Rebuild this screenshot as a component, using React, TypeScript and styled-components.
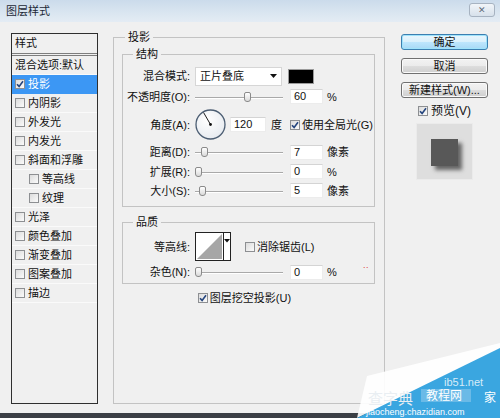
import React from 'react';
import styled, { createGlobalStyle } from 'styled-components';

const GlobalStyle = createGlobalStyle`
  html, body {
    margin: 0;
    padding: 0;
    background: #f0f0f0;
  }
  body {
    font-family: "Liberation Sans", "Noto Sans CJK SC", sans-serif;
    font-size: 11px;
    color: #111;
  }
`;

interface Effect {
  name: string
  checked?: boolean
  selected?: boolean
  sub?: boolean
}

const effects: Effect[] = [
  { name: '投影', checked: true, selected: true },
  { name: '内阴影' },
  { name: '外发光' },
  { name: '内发光' },
  { name: '斜面和浮雕' },
  { name: '等高线', sub: true },
  { name: '纹理', sub: true },
  { name: '光泽' },
  { name: '颜色叠加' },
  { name: '渐变叠加' },
  { name: '图案叠加' },
  { name: '描边' },
];

const CheckBox = ({ checked }: { checked?: boolean }) => (
  <Box>
    {checked && (
      <svg width="8" height="8" viewBox="0 0 8 8">
        <path d="M1 4.2 L3.1 6.4 L7 1.2" stroke="#25457e" strokeWidth="1.6" fill="none" />
      </svg>
    )}
  </Box>
);

const Slider = ({ pos }: { pos: number }) => (
  <Track>
    <Thumb style={{ left: Math.round(pos * 81) }} />
  </Track>
);

const Dial = () => (
  <svg width="31" height="31" viewBox="0 0 31 31">
    <defs>
      <radialGradient id="dialFill" cx="40%" cy="35%" r="70%">
        <stop offset="0" stopColor="#ffffff" />
        <stop offset="1" stopColor="#e6eaef" />
      </radialGradient>
    </defs>
    <circle cx="15.5" cy="15.5" r="14.5" fill="url(#dialFill)" stroke="#4b5d72" strokeWidth="1.3" />
    <line x1="15.5" y1="15.5" x2="8.6" y2="3.6" stroke="#1b1b1b" strokeWidth="1" />
    <circle cx="15.5" cy="15.5" r="1.4" fill="#111" />
  </svg>
);

const ContourPicker = () => (
  <Contour>
    <svg width="27" height="27" viewBox="0 0 27 27">
      <rect x="0" y="0" width="27" height="27" fill="#fff" />
      <polygon points="1,26 26,1 26,26" fill="#a6a6a6" />
    </svg>
    <ContourArrow>
      <svg width="6" height="4" viewBox="0 0 6 4">
        <polygon points="0,0 6,0 3,3.5" fill="#111" />
      </svg>
    </ContourArrow>
  </Contour>
);

const App = () => {
  return (
    <>
      <GlobalStyle />
      <Window>
        <TitleBar>
          <Title>图层样式</Title>
          <CloseButton>✕</CloseButton>
        </TitleBar>
        <Body>
          <StyleList>
            <ListHeader>样式</ListHeader>
            <ListRow>混合选项:默认</ListRow>
            {effects.map(e => (
              <ListRow key={e.name} $selected={e.selected} $sub={e.sub}>
                <CheckBox checked={e.checked} />
                <span>{e.name}</span>
              </ListRow>
            ))}
          </StyleList>

          <OuterGroup>
            <Legend $inset={3}>投影</Legend>
            <InnerGroup>
              <Legend $inset={10}>结构</Legend>
              <FormRow $h={20}>
                <Label>混合模式:</Label>
                <Controls>
                  <Select>
                    <span>正片叠底</span>
                    <svg width="7" height="4" viewBox="0 0 7 4">
                      <polygon points="0,0 7,0 3.5,4" fill="#111" />
                    </svg>
                  </Select>
                  <Swatch />
                </Controls>
              </FormRow>
              <FormRow $h={21}>
                <Label>不透明度(O):</Label>
                <Controls>
                  <Slider pos={0.6} />
                  <Field $w={33}>60</Field>
                  <Unit>%</Unit>
                </Controls>
              </FormRow>
              <FormRow $h={35}>
                <Label>角度(A):</Label>
                <Controls>
                  <Dial />
                  <Field $w={36} $gap={4}>120</Field>
                  <Unit $gap={5}>度</Unit>
                  <CheckLabel $gap={8}>
                    <CheckBox checked />
                    <span>使用全局光(G)</span>
                  </CheckLabel>
                </Controls>
              </FormRow>
              <FormRow $h={20}>
                <Label>距离(D):</Label>
                <Controls>
                  <Slider pos={0.07} />
                  <Field $w={33}>7</Field>
                  <Unit>像素</Unit>
                </Controls>
              </FormRow>
              <FormRow $h={19}>
                <Label>扩展(R):</Label>
                <Controls>
                  <Slider pos={0} />
                  <Field $w={33}>0</Field>
                  <Unit>%</Unit>
                </Controls>
              </FormRow>
              <FormRow $h={19}>
                <Label>大小(S):</Label>
                <Controls>
                  <Slider pos={0.055} />
                  <Field $w={33}>5</Field>
                  <Unit>像素</Unit>
                </Controls>
              </FormRow>
            </InnerGroup>

            <QualityGroup>
              <Legend $inset={10}>品质</Legend>
              <FormRow $h={29}>
                <Label>等高线:</Label>
                <Controls>
                  <ContourPicker />
                  <CheckLabel $gap={14}>
                    <CheckBox />
                    <span>消除锯齿(L)</span>
                  </CheckLabel>
                </Controls>
              </FormRow>
              <FormRow $h={22}>
                <Label>杂色(N):</Label>
                <Controls>
                  <Slider pos={0} />
                  <Field $w={33}>0</Field>
                  <Unit>%</Unit>
                  <RedMark>··</RedMark>
                </Controls>
              </FormRow>
            </QualityGroup>

            <KnockoutRow>
              <CheckLabel>
                <CheckBox checked />
                <span>图层挖空投影(U)</span>
              </CheckLabel>
            </KnockoutRow>
          </OuterGroup>

          <SideColumn>
            <Button $primary>确定</Button>
            <Button>取消</Button>
            <Button>新建样式(W)...</Button>
            <PreviewToggle>
              <CheckBox checked />
              <span>预览(V)</span>
            </PreviewToggle>
            <PreviewBox>
              <PreviewSquare />
            </PreviewBox>
          </SideColumn>
        </Body>
        <BottomEdge />

        <Watermark width="145" height="80" viewBox="355 338 145 80">
          <polygon points="367,376 500,343 500,349 357,418" fill="#ffffff" opacity="0.92" />
          <polygon points="357,418 500,348 500,418" fill="#3aa6e0" />
          <rect x="421" y="389" width="50" height="13" fill="#7fc3ea" opacity="0.7" />
          <text x="444" y="386" fontSize="11" fill="#d6ecf8" fontFamily="Liberation Sans, sans-serif">ib51.net</text>
          <text x="368" y="404" fontSize="15" fill="#e9eef2" fontFamily="Noto Sans CJK SC, sans-serif">查字典</text>
          <text x="426" y="400" fontSize="12" fill="#ffffff" fontFamily="Noto Sans CJK SC, sans-serif">教程网</text>
          <text x="484" y="402" fontSize="12" fill="#ffffff" fontFamily="Noto Sans CJK SC, sans-serif">家</text>
          <text x="366" y="415" fontSize="9" fill="#ffffff" fontFamily="Liberation Sans, sans-serif">jiaocheng.chazidian.com</text>
        </Watermark>
      </Window>
    </>
  );
};

const Window = styled.div`
  position: relative;
  width: 500px;
  height: 418px;
  overflow: hidden;
  display: flex;
  flex-direction: column;
  background: #f0f0f0;
`;

const TitleBar = styled.div`
  flex: none;
  height: 22px;
  display: flex;
  align-items: center;
  justify-content: space-between;
  padding: 0 5px 0 6px;
  background: linear-gradient(to bottom, #cbdbeb, #d9e5f0 55%, #e4ecf4);
`;

const Title = styled.span`
  font-size: 11px;
  line-height: 14px;
  color: #1c2836;
`;

const CloseButton = styled.div`
  width: 26px;
  height: 14px;
  margin-top: -3px;
  box-sizing: border-box;
  border: 1px solid #a7b3c1;
  border-radius: 3px;
  background: linear-gradient(#f1f5f9, #d7e1eb);
  display: flex;
  align-items: center;
  justify-content: center;
  font-size: 9px;
  color: #5f6b79;
`;

const Body = styled.div`
  flex: 1;
  display: flex;
  align-items: flex-start;
  padding: 8px 0 0 11px;
`;

const BottomEdge = styled.div`
  flex: none;
  height: 5px;
  background: #3b3f45;
`;

const StyleList = styled.div`
  width: 87px;
  height: 371px;
  margin-top: 3px;
  box-sizing: border-box;
  border: 1px solid #2f2f2f;
  background: #f0f0f0;
  display: flex;
  flex-direction: column;
`;

const ListHeader = styled.div`
  height: 22px;
  box-sizing: border-box;
  padding: 2px 0 0 3px;
  line-height: 15px;
  border-bottom: 3px double #7d7d7d;
`;

const ListRow = styled.div<{ $selected?: boolean, $sub?: boolean }>`
  height: 19px;
  box-sizing: border-box;
  display: flex;
  align-items: center;
  gap: 3px;
  padding-left: ${p => (p.$sub ? 17 : 3)}px;
  border-bottom: 1px solid ${p => (p.$selected ? '#3c97f4' : '#fafafa')};
  background: ${p => (p.$selected ? '#3c97f4' : 'transparent')};
  color: ${p => (p.$selected ? '#fff' : '#111')};
  line-height: 15px;
  white-space: nowrap;
`;

const Box = styled.span`
  flex: none;
  width: 10px;
  height: 10px;
  box-sizing: border-box;
  border: 1px solid #8d8f92;
  background: linear-gradient(135deg, #dcdcdc, #fbfbfb);
  display: inline-flex;
  align-items: center;
  justify-content: center;
`;

const OuterGroup = styled.fieldset`
  width: 272px;
  height: 374px;
  box-sizing: border-box;
  min-inline-size: 0;
  margin: 0 0 0 15px;
  padding: 3px 9px 0 8px;
  border: 1px solid #c3c3c3;
`;

const Legend = styled.legend<{ $inset: number }>`
  margin-left: ${p => p.$inset}px;
  padding: 0 3px;
  height: 14px;
  font-size: 11px;
  line-height: 14px;
`;

const InnerGroup = styled.fieldset`
  min-inline-size: 0;
  margin: 0;
  padding: 5px 0 6px 0;
  border: 1px solid #c3c3c3;
`;

const QualityGroup = styled(InnerGroup)`
  margin-top: 8px;
  padding: 3px 0 0 0;
`;

const FormRow = styled.div<{ $h: number }>`
  height: ${p => p.$h}px;
  display: grid;
  grid-template-columns: 67px auto;
  column-gap: 5px;
  align-items: center;
`;

const Label = styled.span`
  text-align: right;
  white-space: nowrap;
  line-height: 14px;
`;

const Controls = styled.div`
  display: flex;
  align-items: center;
  white-space: nowrap;
  line-height: 14px;
`;

const Select = styled.div`
  width: 87px;
  height: 19px;
  box-sizing: border-box;
  border: 1px solid #d6d6d6;
  background: #fff;
  display: flex;
  align-items: center;
  justify-content: space-between;
  padding: 0 4px 0 4px;
`;

const Swatch = styled.div`
  width: 26px;
  height: 15px;
  margin-left: 6px;
  box-sizing: border-box;
  border: 1px solid #9a9a9a;
  background: #000;
`;

const Track = styled.div`
  position: relative;
  flex: none;
  width: 88px;
  height: 12px;

  &::before {
    content: '';
    position: absolute;
    left: 0;
    right: 0;
    top: 6px;
    height: 1px;
    background: #a9a9a9;
    box-shadow: 0 1px 0 #fff;
  }
`;

const Thumb = styled.div`
  position: absolute;
  top: 1px;
  width: 7px;
  height: 10px;
  box-sizing: border-box;
  border: 1px solid #8a8a8a;
  border-radius: 2px 2px 3px 3px;
  background: linear-gradient(#ffffff, #dadada);
`;

const Field = styled.div<{ $w: number, $gap?: number }>`
  flex: none;
  width: ${p => p.$w}px;
  height: 15px;
  margin-left: ${p => p.$gap ?? 7}px;
  box-sizing: border-box;
  padding-left: 3px;
  background: #fff;
  border: 1px solid #ececec;
  border-top-color: #d4d4d4;
  line-height: 13px;
`;

const Unit = styled.span<{ $gap?: number }>`
  margin-left: ${p => p.$gap ?? 4}px;
`;

const CheckLabel = styled.span<{ $gap?: number }>`
  display: inline-flex;
  align-items: center;
  gap: 2px;
  margin-left: ${p => p.$gap ?? 0}px;
  white-space: nowrap;
`;

const Contour = styled.div`
  display: flex;
  height: 27px;
  border: 1px solid #222;
`;

const ContourArrow = styled.div`
  width: 7px;
  border-left: 1px solid #222;
  background: #fff;
  display: flex;
  justify-content: center;
  padding-top: 6px;
  box-sizing: border-box;
`;

const RedMark = styled.span`
  margin-left: 26px;
  margin-top: -10px;
  color: #e04040;
  font-size: 9px;
`;

const KnockoutRow = styled.div`
  display: flex;
  justify-content: center;
  height: 14px;
  margin-top: 7px;
  padding-right: 8px;
  line-height: 14px;
`;

const SideColumn = styled.div`
  width: 87px;
  margin: 4px 0 0 16px;
  display: flex;
  flex-direction: column;
  align-items: center;
`;

const Button = styled.div<{ $primary?: boolean }>`
  width: 87px;
  height: 16px;
  box-sizing: border-box;
  border: 1px solid ${p => (p.$primary ? '#3c7fb1' : '#707070')};
  border-radius: 3px;
  background: ${p => (p.$primary
    ? 'linear-gradient(#eaf6fd, #d9f0fc 50%, #bee6fd 51%, #a7d9f5)'
    : 'linear-gradient(#f2f2f2, #ebebeb 50%, #dddddd 51%, #cfcfcf)')};
  box-shadow: ${p => (p.$primary ? 'inset 0 0 0 1px #9fe3fb' : 'inset 0 0 0 1px #fafafa')};
  display: flex;
  align-items: center;
  justify-content: center;
  font-size: 11px;
  line-height: 13px;
  color: #111;
  white-space: nowrap;

  & + & {
    margin-top: 8px;
  }
`;

const PreviewToggle = styled.div`
  height: 14px;
  margin-top: 6px;
  display: flex;
  align-items: center;
  gap: 3px;
  font-size: 12px;
  line-height: 14px;
`;

const PreviewBox = styled.div`
  width: 57px;
  height: 57px;
  margin-top: 5px;
  box-sizing: border-box;
  border: 1px solid #ebebeb;
  background: #dedede;
  display: flex;
  align-items: center;
  justify-content: center;
`;

const PreviewSquare = styled.div`
  width: 27px;
  height: 27px;
  margin: 1px 0 0 -1px;
  background: #585858;
  box-shadow: 4px 4px 4px rgba(0, 0, 0, 0.55);
`;

const Watermark = styled.svg`
  position: absolute;
  right: 0;
  bottom: 0;
`;

export default App;
